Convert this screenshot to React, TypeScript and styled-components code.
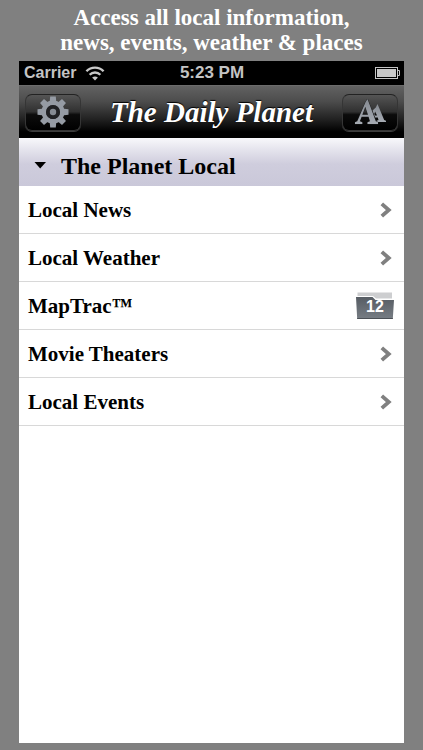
import React from "react";
import styled, { createGlobalStyle } from "styled-components";

const GlobalStyle = createGlobalStyle`
  *, *::before, *::after { box-sizing: border-box; }
  body { margin: 0; background: #808080; }
  button { font: inherit; color: inherit; cursor: pointer; }
`;

const serif = `"Liberation Serif", "Times New Roman", serif`;
const sans = `"Liberation Sans", Arial, sans-serif`;

const Page = styled.div`
  min-height: 100vh;
  display: flex;
  flex-direction: column;
  padding: 5px 19px 7px;
  background: #808080;
`;

const Headline = styled.h1`
  margin: 0 0 6px;
  color: #fff;
  font: bold 23px/25px ${serif};
  text-align: center;
  white-space: nowrap;
`;

const Screen = styled.main`
  flex: 1;
  display: flex;
  flex-direction: column;
  background: #fff;
`;

const StatusBar = styled.div`
  height: 24px;
  display: grid;
  grid-template-columns: 1fr auto 1fr;
  align-items: center;
  padding: 0 4px 0 5px;
  background: #000;
  color: #c4c4c4;
  font: bold 16px/24px ${sans};
`;

const Carrier = styled.span`
  display: flex;
  align-items: center;
  gap: 9px;
`;

const Clock = styled.time`
  font-size: 17px;
`;

const BatteryIcon = styled.svg`
  justify-self: end;
`;

const NavBar = styled.header`
  height: 53px;
  display: flex;
  align-items: center;
  justify-content: space-between;
  padding: 0 6px;
  background: linear-gradient(#626262, #4c4c4c 30%, #202020 65%, #000 88%);
  border-top: 1px solid #6c6c6c;
`;

const NavButton = styled.button`
  width: 56px;
  height: 37px;
  display: flex;
  align-items: center;
  justify-content: center;
  padding: 0;
  border: 1px solid #353535;
  border-top-color: #222;
  border-radius: 7px;
  background: linear-gradient(#555, #303030 48%, #0c0c0c 56%, #000);
  box-shadow: 0 1px 0 #3d3d3d;
`;

const Title = styled.h2`
  margin: 0;
  color: #fff;
  font: italic bold 29px/40px ${serif};
  text-shadow: 0 -1px 1px #000;
  white-space: nowrap;
`;

const SectionToggle = styled.button`
  height: 48px;
  display: flex;
  align-items: center;
  gap: 15px;
  padding: 7px 15px 0;
  border: 0;
  background: linear-gradient(#f8f8fb, #e5e4ed 24%, #cfcddd 54%, #cac8d9);
  && {
    color: #000;
    font: bold 24px/32px ${serif};
  }
`;

const List = styled.ul`
  list-style: none;
  margin: 0;
  padding: 0;
`;

const Item = styled.li`
  border-bottom: 1px solid #d8d8d8;
`;

const RowLink = styled.a<{ $folder?: boolean }>`
  height: 47px;
  display: flex;
  align-items: center;
  justify-content: space-between;
  padding: 0 ${(p) => (p.$folder ? 9 : 12)}px 0 9px;
  color: #000;
  font: bold 21px/32px ${serif};
  text-decoration: none;
`;

const Folder = styled.span`
  position: relative;
  display: flex;
  width: 40px;
  height: 28px;
`;

const Count = styled.span`
  position: absolute;
  inset: 0;
  color: #fff;
  font: bold 16px/29px ${sans};
  text-align: center;
`;

const Wifi = () => (
  <svg width="20" height="15" viewBox="0 0 18 14" fill="none" stroke="#c8c8c8" aria-label="Wi-Fi">
    <path d="M1 4.9C5.5.4 12.5.4 17 4.9" strokeWidth="2.3" />
    <path d="M4 8.2C6.8 5.4 11.2 5.4 14 8.2" strokeWidth="2.2" />
    <path d="M9 13.5 6.3 10.7Q9 8.7 11.7 10.7Z" fill="#c8c8c8" stroke="none" />
  </svg>
);

const Battery = () => (
  <BatteryIcon width="25" height="12" viewBox="0 0 25 12" aria-label="Battery full">
    <rect x=".5" y=".5" width="22" height="11" fill="none" stroke="#c4c4c4" />
    <rect x="2" y="2" width="19" height="8" fill="#c8c8c8" />
    <path d="M23 3.5h1.5v5H23" fill="none" stroke="#c4c4c4" />
  </BatteryIcon>
);

const Gear = () => (
  <svg width="32" height="32" viewBox="-16 -16 32 32" aria-hidden="true">
    <g fill="#959ba4">
      {[0, 45, 90, 135, 180, 225, 270, 315].map((angle) => (
        <path key={angle} d="M-3.4-9-2.8-15.5H2.8L3.4-9Z" transform={`rotate(${angle})`} />
      ))}
    </g>
    <circle r="9.2" fill="none" stroke="#959ba4" strokeWidth="4.6" />
    <circle r="7" fill="#202124" />
    <circle r="3.2" fill="#858b93" />
  </svg>
);

const Letters = () => (
  <svg width="32" height="28" viewBox="0 0 32 28" aria-hidden="true">
    <defs>
      <linearGradient id="steel" x1="0" y1="0" x2="0" y2="1">
        <stop offset="0" stopColor="#858a91" />
        <stop offset="1" stopColor="#a6abb3" />
      </linearGradient>
    </defs>
    <g fill="url(#steel)" fillRule="evenodd">
      <path d="M23.5 6 30.2 22 32 22.8V24H22.5V22.8L24.5 22 23.8 19.5H21L18.5 12.5 21.8 9.5ZM21.2 13.5 20.2 16 21 17.5H23Z" />
      <path
        d="M13.5 1 21.8 23.2 24 24.3V26H13.5V24.3L16 23.2 14.6 18.7H7.6L5.8 23.2 8.3 24.3V26H1V24.3L3.3 23.2 11.6 4ZM11.3 8.8 8.3 16.8H14Z"
        stroke="#18191b"
        strokeWidth=".8"
        paintOrder="stroke"
      />
    </g>
  </svg>
);

const Chevron = () => (
  <svg width="12" height="16" viewBox="0 0 12 16" fill="none" aria-hidden="true">
    <path d="M1.8 1.8 8.8 8 1.8 14.2" stroke="#808080" strokeWidth="3.8" />
  </svg>
);

const Caret = () => (
  <svg width="12" height="7" viewBox="0 0 12 7" aria-hidden="true">
    <path d="M.5 0H12L6.2 6.5Z" />
  </svg>
);

const FolderBadge = ({ count }: { count: number }) => (
  <Folder>
    <svg width="40" height="28" viewBox="0 0 40 28" aria-hidden="true">
      <defs>
        <linearGradient id="folder" x1="0" y1="0" x2="0" y2="1">
          <stop offset="0" stopColor="#565c63" />
          <stop offset="1" stopColor="#777d84" />
        </linearGradient>
      </defs>
      <path d="M2.5.5H37V7H2.5Z" fill="#cdced0" />
      <path d="M.6 4H18L21 6.5H39.4L38 27.5H2Z" fill="#fff" />
      <path d="M1 5H17.5L20.5 8H39L37.8 27H2.2Z" fill="url(#folder)" />
      <path d="M2.2 26.5H37.8" stroke="#4b5056" />
    </svg>
    <Count>{count}</Count>
  </Folder>
);

const items: { label: string; count?: number }[] = [
  { label: "Local News" },
  { label: "Local Weather" },
  { label: "MapTrac™", count: 12 },
  { label: "Movie Theaters" },
  { label: "Local Events" },
];

export default function App() {
  const [open, setOpen] = React.useState(true);
  return (
    <Page>
      <GlobalStyle />
      <Headline>
        Access all local information,
        <br />
        news, events, weather &amp; places
      </Headline>
      <Screen>
        <StatusBar>
          <Carrier>
            Carrier
            <Wifi />
          </Carrier>
          <Clock>5:23 PM</Clock>
          <Battery />
        </StatusBar>
        <NavBar>
          <NavButton aria-label="Settings">
            <Gear />
          </NavButton>
          <Title>The Daily Planet</Title>
          <NavButton aria-label="Text size">
            <Letters />
          </NavButton>
        </NavBar>
        <SectionToggle aria-expanded={open} onClick={() => setOpen(!open)}>
          <Caret />
          The Planet Local
        </SectionToggle>
        {open && (
          <List>
            {items.map(({ label, count }) => (
              <Item key={label}>
                <RowLink href="#" $folder={count !== undefined}>
                  {label}
                  {count !== undefined ? <FolderBadge count={count} /> : <Chevron />}
                </RowLink>
              </Item>
            ))}
          </List>
        )}
      </Screen>
    </Page>
  );
}
